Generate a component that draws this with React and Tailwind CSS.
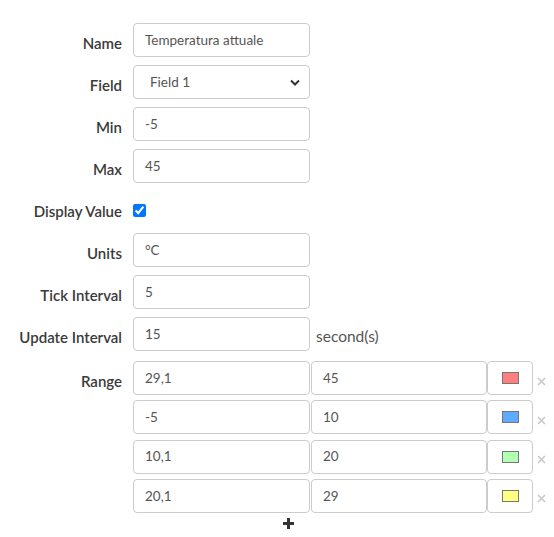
import React from "react";

const font = { fontFamily: "Lato, 'Noto Sans', sans-serif" };

function Label({ children }) {
  return (
    <div className="w-[122px] shrink-0 text-right pt-[10px] text-[15px] font-semibold text-[#3a3a3a] leading-[20px]">
      {children}
    </div>
  );
}

function Input({ value, w = "w-[177px]" }) {
  return (
    <div className={`${w} h-[34px] shrink-0 border border-[#ccc] rounded-[4px] bg-white flex items-center pl-[11px] text-[13.5px] text-[#555]`}>
      {value}
    </div>
  );
}

function Row({ label, children }) {
  return (
    <div className="flex items-start gap-[11px] h-[34px]">
      <Label>{label}</Label>
      {children}
    </div>
  );
}

const ranges = [
  ["29,1", "45", "#ff7f7f"],
  ["-5", "10", "#5fabff"],
  ["10,1", "20", "#b3ffb3"],
  ["20,1", "29", "#ffff80"],
];

export default function App() {
  return (
    <div className="w-[554px] h-[537px] bg-white pt-[23px]" style={font}>
      <div className="flex flex-col gap-[8px]">
        <Row label="Name"><Input value="Temperatura attuale" /></Row>
        <Row label="Field">
          <div className="w-[177px] h-[34px] border border-[#ccc] rounded-[4px] flex items-center justify-between pl-[16px] pr-[9px] text-[13.5px] text-[#555]">
            <span>Field 1</span>
            <svg width="10" height="7" viewBox="0 0 10 7"><path d="M1 1.5 L5 5.5 L9 1.5" fill="none" stroke="#333" strokeWidth="2" /></svg>
          </div>
        </Row>
        <Row label="Min"><Input value="-5" /></Row>
        <Row label="Max"><Input value="45" /></Row>
        <Row label="Display Value">
          <div className="pt-[13px] flex">
            <input type="checkbox" defaultChecked className="w-[13px] h-[13px] m-0 accent-[#0075ff]" />
          </div>
        </Row>
        <Row label="Units"><Input value="°C" /></Row>
        <Row label="Tick Interval"><Input value="5" /></Row>
        <Row label="Update Interval">
          <Input value="15" />
          <div className="pt-[9px] -ml-[5px] text-[15.5px] text-[#555] leading-[20px]">second(s)</div>
        </Row>
      </div>
      <div className="flex gap-[11px] mt-[10px]">
        <Label>Range</Label>
        <div className="flex flex-col gap-[5.3px]">
          {ranges.map(([a, b, c], i) => (
            <div key={i} className="flex items-center h-[34px]">
              <Input value={a} w="w-[177px]" />
              <div className="ml-[1px]"><Input value={b} w="w-[176px]" /></div>
              <div className="w-[46px] h-[34px] border border-[#ccc] rounded-[4px] flex items-center justify-center">
                <div className="w-[17px] h-[12px] border border-[#777]" style={{ backgroundColor: c }} />
              </div>
              <svg className="ml-[4px] mt-[6px]" width="9" height="9" viewBox="0 0 9 9">
                <path d="M1 1 L8 8 M8 1 L1 8" stroke="#c8c8c8" strokeWidth="1.6" />
              </svg>
            </div>
          ))}
          <div className="flex pl-[150px] pt-[0px]">
            <svg width="11" height="11" viewBox="0 0 11 11">
              <path d="M5.5 0 V11 M0 5.5 H11" stroke="#333" strokeWidth="3" />
            </svg>
          </div>
        </div>
      </div>
    </div>
  );
}
